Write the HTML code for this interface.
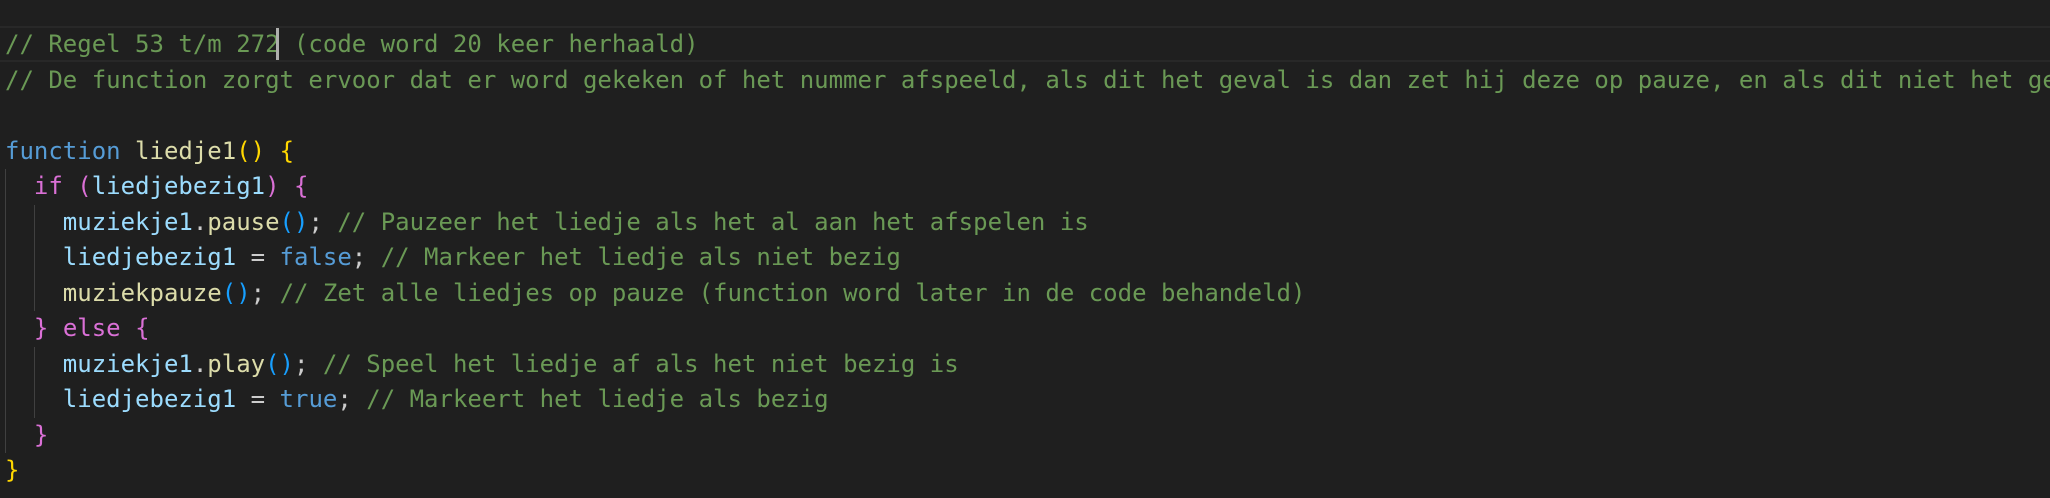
<!DOCTYPE html>
<html><head><meta charset="utf-8"><style>
html,body{margin:0;padding:0;background:#1f1f1f;width:2050px;height:498px;overflow:hidden;position:relative}
.ed{position:absolute;left:0;top:27px;width:2050px;font-family:"DejaVu Sans Mono","Liberation Mono",monospace;font-size:24px;line-height:35.5px;color:#cccccc;overflow:hidden}
.l{height:35.5px;position:relative;padding-left:5px;white-space:pre;overflow:hidden}
.c{color:#6a9955}.k{color:#569cd6}.f{color:#dcdcaa}.y{color:#ffd700}.p{color:#da70d6}.v{color:#9cdcfe}.b{color:#179fff}
.hl{position:absolute;left:0;top:26px;width:2050px;height:32px;border-top:2px solid #282828;border-bottom:2px solid #282828}
.g{position:absolute;width:1px;background:#404040}
.cur{position:absolute;left:276px;top:28px;width:3px;height:32px;background:#aeafad}
</style></head><body>
<div class="hl"></div>
<div class="g" style="left:5px;top:169px;height:284px"></div>
<div class="g" style="left:34px;top:205px;height:106px"></div>
<div class="g" style="left:34px;top:347px;height:71px"></div>
<div class="ed"><div class="l"><span class="c">// Regel 53 t/m 272 (code word 20 keer herhaald)</span></div><div class="l"><span class="c">// De function zorgt ervoor dat er word gekeken of het nummer afspeeld, als dit het geval is dan zet hij deze op pauze, en als dit niet het geval is dan speelt hij het af</span></div><div class="l"> </div><div class="l"><span class="k">function</span> <span class="f">liedje1</span><span class="y">()</span> <span class="y">{</span></div><div class="l">  <span class="p">if</span> <span class="p">(</span><span class="v">liedjebezig1</span><span class="p">)</span> <span class="p">{</span></div><div class="l">    <span class="v">muziekje1</span>.<span class="f">pause</span><span class="b">()</span>; <span class="c">// Pauzeer het liedje als het al aan het afspelen is</span></div><div class="l">    <span class="v">liedjebezig1</span> = <span class="k">false</span>; <span class="c">// Markeer het liedje als niet bezig</span></div><div class="l">    <span class="f">muziekpauze</span><span class="b">()</span>; <span class="c">// Zet alle liedjes op pauze (function word later in de code behandeld)</span></div><div class="l">  <span class="p">}</span> <span class="p">else</span> <span class="p">{</span></div><div class="l">    <span class="v">muziekje1</span>.<span class="f">play</span><span class="b">()</span>; <span class="c">// Speel het liedje af als het niet bezig is</span></div><div class="l">    <span class="v">liedjebezig1</span> = <span class="k">true</span>; <span class="c">// Markeert het liedje als bezig</span></div><div class="l">  <span class="p">}</span></div><div class="l"><span class="y">}</span></div></div>
<div class="cur"></div>
</body></html>
